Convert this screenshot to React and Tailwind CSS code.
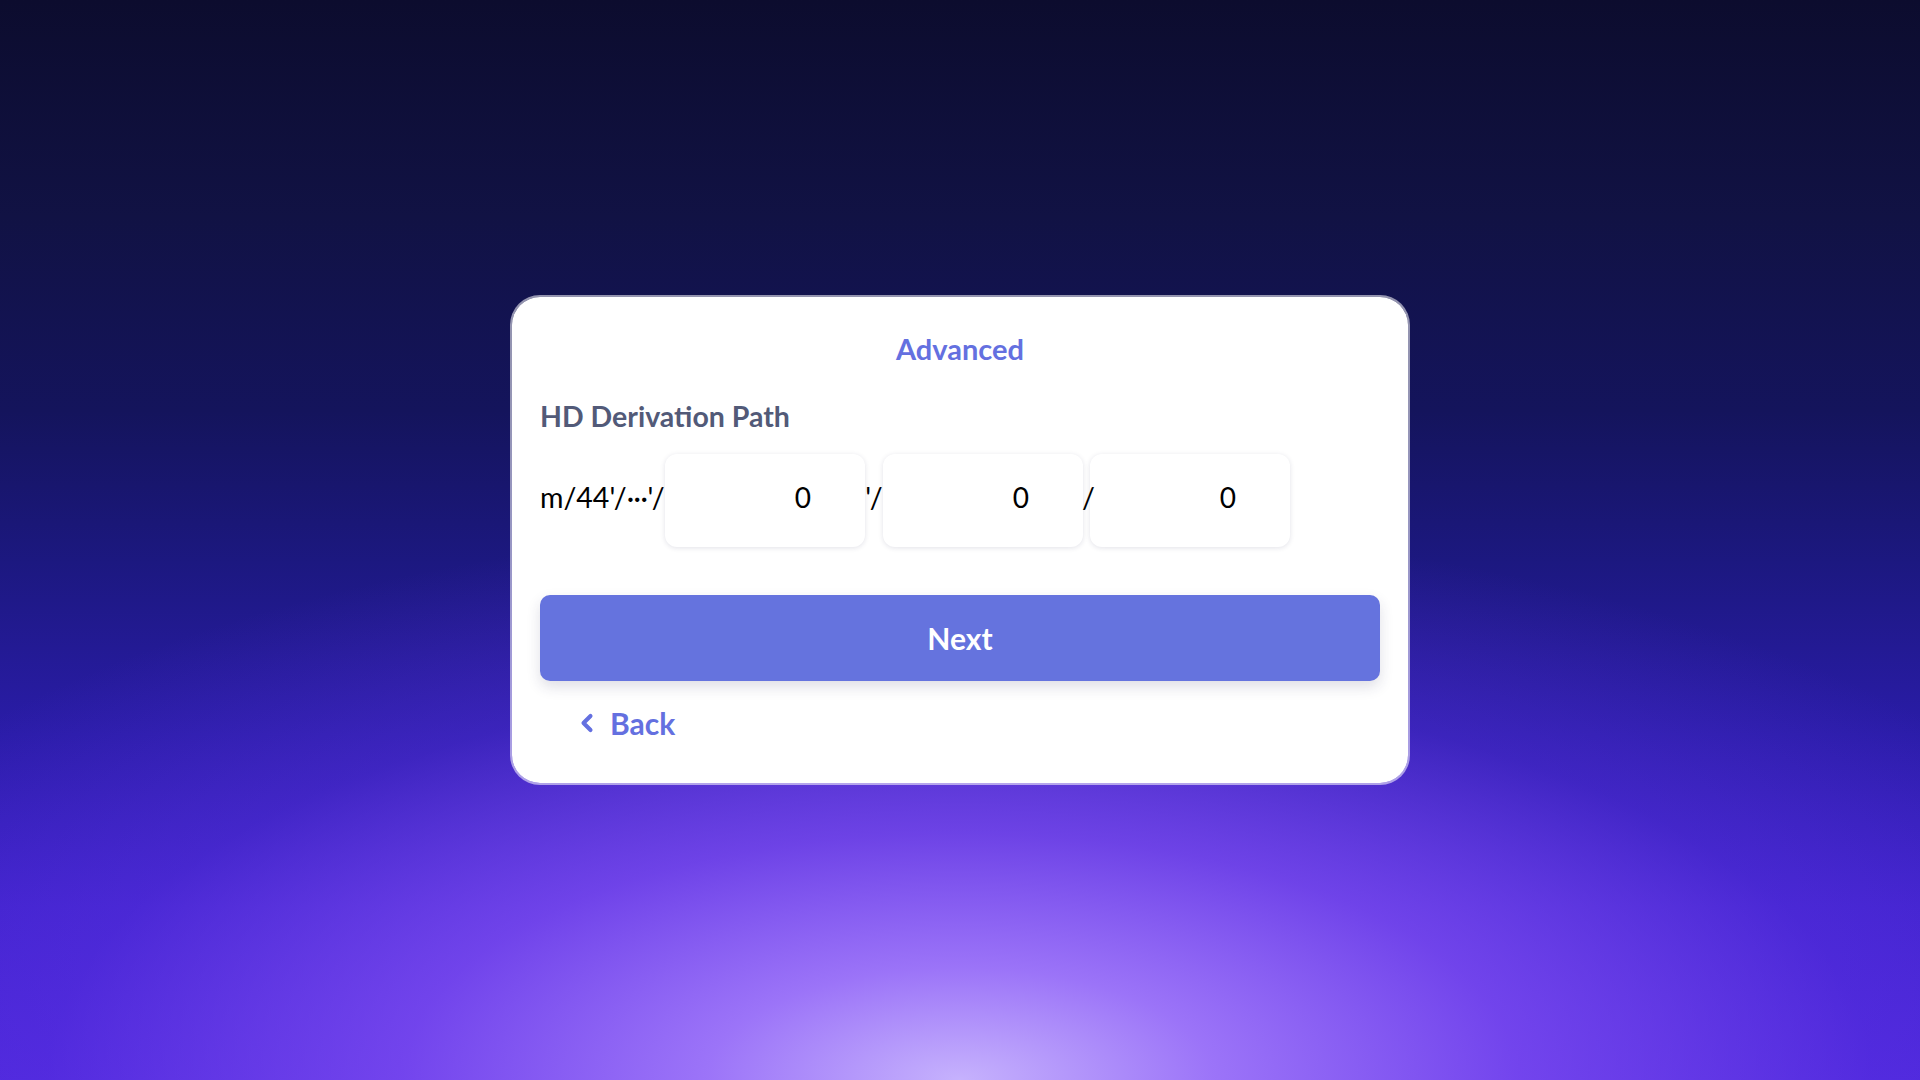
import { ChevronLeft } from "lucide-react";

const PathInput = ({ value }) => (
    <div className="w-[200px] h-[93px] shrink-0 rounded-[12px] bg-white shadow-[0_1px_5px_rgba(30,30,80,0.13)] flex items-center justify-end pr-[54px] pb-[7px]">
        <span className="text-[28px] leading-none text-black">{value}</span>
    </div>
);

const App = () => (
    <div
        className="min-h-screen w-full flex items-center justify-center font-['Lato','Noto_Sans',sans-serif]"
        style={{
            background:
                "radial-gradient(ellipse 66% 52% at 50% 100%, rgba(198,178,253,1) 0%, rgba(160,120,250,0.95) 20%, rgba(130,80,245,0.72) 44%, rgba(100,55,235,0.3) 72%, rgba(90,50,230,0) 100%), linear-gradient(to bottom, #0c0c2e 0%, #111244 20%, #14145c 38%, #1c1880 52%, #2a1ca8 68%, #3f22cc 84%, #4b26da 100%)",
        }}
    >
        <div className="w-[900px] h-[490px] rounded-[30px] border-2 border-white/55 bg-white bg-clip-padding px-[28px] pt-[34px] pb-[40px] flex flex-col">
            <h2 className="text-center text-[29px] leading-[36px] font-bold text-[#6470e0]">Advanced</h2>

            <h3 className="mt-[31px] text-[28.5px] leading-[36px] font-bold text-[#525a78]">HD Derivation Path</h3>

            <div className="mt-[20px] flex items-center text-[28.5px] text-black whitespace-nowrap">
                <span className="w-[125px] shrink-0 pb-[7px]">m/44'/<span className="tracking-[-0.5px]">···</span>'/</span>
                <PathInput value="0" />
                <span className="relative z-10 w-[18px] shrink-0 text-center pb-[7px]">'/</span>
                <PathInput value="0" />
                <span className="relative z-10 w-[8px] shrink-0 -ml-[1px] pb-[7px]">/</span>
                <PathInput value="0" />
            </div>

            <button className="mt-[48px] h-[86px] w-full rounded-[10px] bg-[#6573de] text-white text-[30px] font-bold shadow-[0_6px_14px_rgba(40,40,90,0.15)]">
                Next
            </button>

            <a href="#" className="mt-[24px] ml-[33px] flex items-center gap-[9px] text-[#6470e0] text-[30px] leading-[36px] font-bold">
                <ChevronLeft size={28} strokeWidth={3.5} />
                Back
            </a>
        </div>
    </div>
);

export default App;
